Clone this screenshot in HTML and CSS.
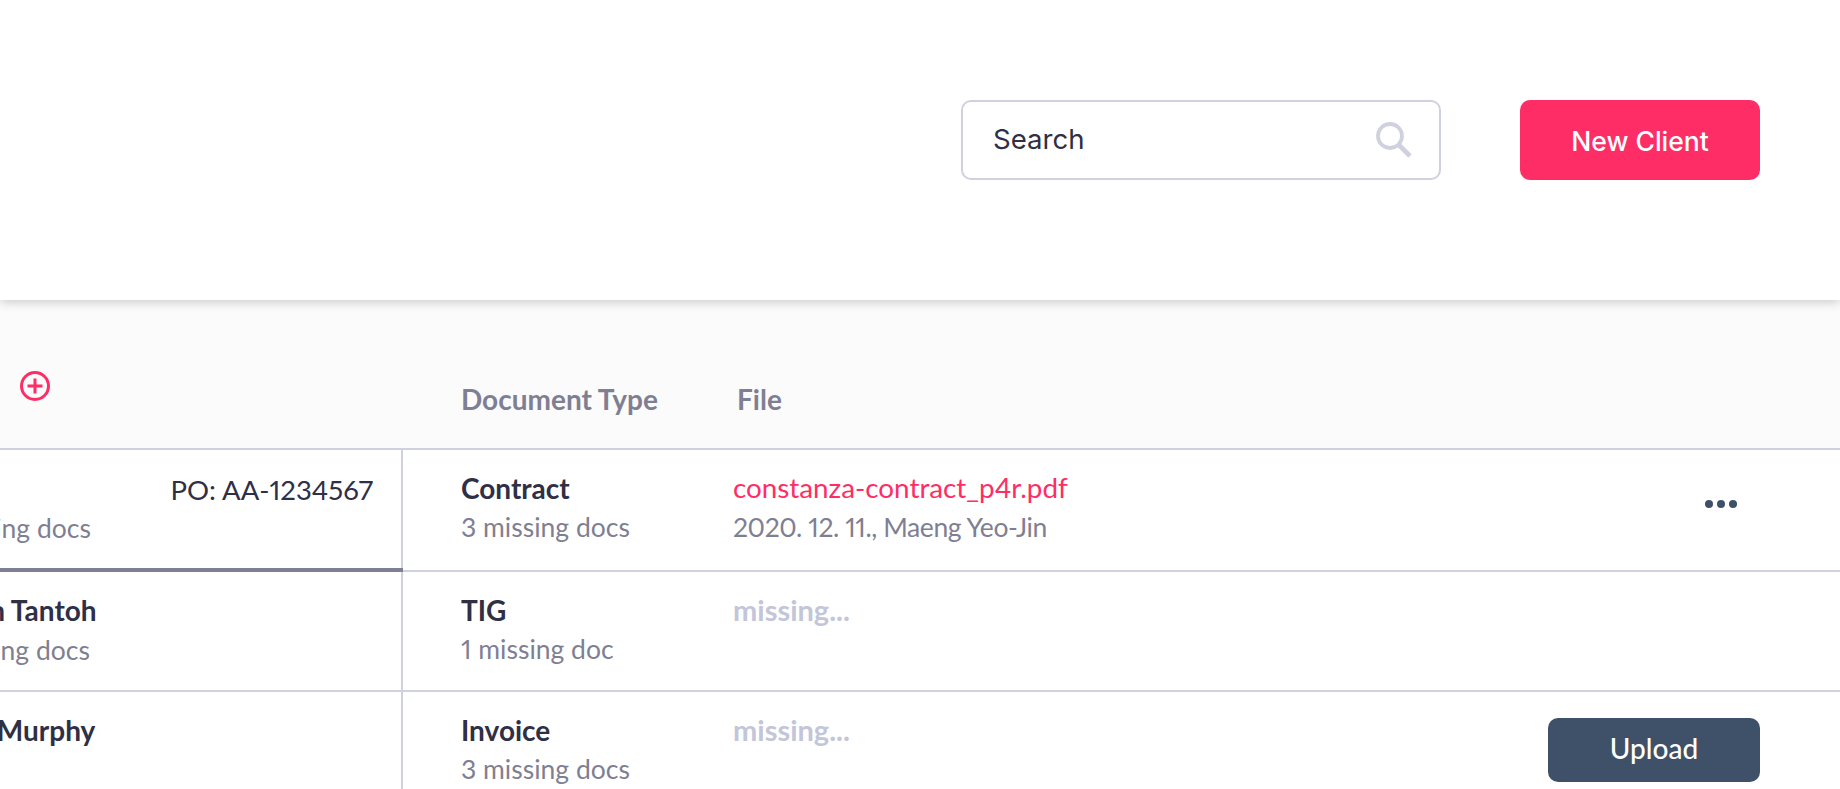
FILE: index.html
```html
<!DOCTYPE html>
<html lang="en">
<head>
<meta charset="utf-8">
<title>Clients</title>
<link rel="stylesheet" href="styles.css">
</head>
<body>
<div class="page">
  <header class="topbar">
    <div class="search">
      <span class="search-label">Search</span>
      <svg class="search-icon" width="38" height="38" viewBox="0 0 38 38" fill="none" stroke="#d0d1e0" stroke-width="3.8">
        <circle cx="15" cy="15" r="12"/>
        <path d="M23.5 23.5 35 35" stroke-width="4.6"/>
      </svg>
    </div>
    <button class="btn btn-new">New Client</button>
  </header>
  <main class="table">
    <div class="row row-head">
      <div class="cell-client head-client">
        <svg class="add-icon" width="32" height="32" viewBox="0 0 32 32" fill="none" stroke="#ff2d65" stroke-width="3">
          <circle cx="16" cy="16" r="13.5"/>
          <path d="M16 8.5v15M8.5 16h15"/>
        </svg>
      </div>
      <div class="cell-type head-label">Document Type</div>
      <div class="cell-file head-label head-file">File</div>
    </div>
    <div class="row row-one">
      <div class="cell-client selected">
        <div class="client-line"><span></span><span class="po">PO: AA-1234567</span></div>
        <div class="sub client-sub">3 missing docs</div>
      </div>
      <div class="cell-type"><div class="title">Contract</div><div class="sub">3 missing docs</div></div>
      <div class="cell-file"><a class="file-link">constanza-contract_p4r.pdf</a><div class="sub date">2020. 12. 11., Maeng Yeo-Jin</div></div>
      <div class="cell-action"><span class="dots"><i></i><i></i><i></i></span></div>
    </div>
    <div class="row row-two">
      <div class="cell-client">
        <div class="client-name title">Ryan Tantoh</div>
        <div class="sub client-sub sub-two">3 missing docs</div>
      </div>
      <div class="cell-type"><div class="title">TIG</div><div class="sub">1 missing doc</div></div>
      <div class="cell-file"><div class="missing">missing...</div></div>
      <div class="cell-action"></div>
    </div>
    <div class="row row-three">
      <div class="cell-client">
        <div class="client-name title name-three">Ann Murphy</div>
      </div>
      <div class="cell-type"><div class="title">Invoice</div><div class="sub">3 missing docs</div></div>
      <div class="cell-file"><div class="missing">missing...</div></div>
      <div class="cell-action"><button class="btn btn-upload">Upload</button></div>
    </div>
  </main>
</div>
</body>
</html>
```
FILE: styles.css
```css
* { box-sizing: border-box; }
html, body { margin: 0; height: 100%; overflow: hidden; }
body { font-family: "Lato", "Open Sans", sans-serif; color: #2f2f45; background: #fff; font-variant-numeric: proportional-nums; }
.page { width: 1840px; height: 789px; display: flex; flex-direction: column; overflow: hidden; background: #fff; }

.topbar {
  height: 300px; flex: none; display: flex; justify-content: flex-end; align-items: flex-start;
  gap: 79px; padding: 100px 80px 0 0; background: #fff;
  box-shadow: 0 2px 10px rgba(0,0,0,.2); position: relative; z-index: 1;
}
.search {
  width: 480px; height: 80px; border: 2px solid #d0d1e0; border-radius: 10px;
  display: flex; align-items: center; justify-content: space-between; padding: 0 26px 0 30px;
}
.search-label { font-family: "Inter", sans-serif; font-size: 27.6px; color: #2f2f45; margin-top: -2px; }
.search-icon { margin-top: -1px; }
.btn { border: 0; color: #fff; cursor: pointer; }
.btn-new {
  width: 240px; height: 80px; background: #ff2d65; border-radius: 10px; padding: 2px 0 0;
  font-family: "Inter", sans-serif; font-size: 26.5px; font-weight: 500;
}

.table { flex: 1; display: flex; flex-direction: column; min-height: 0; }
.row { display: grid; grid-template-columns: 403px 330px 1fr 360px; border-bottom: 2px solid #cfd0e0; background: #fff; }
.row-head { height: 150px; background: #fbfbfb; }
.row-one { height: 122px; }
.row-two { height: 120px; }
.row-three { flex: 1; border-bottom: 0; }

.cell-client { border-right: 2px solid #cfd0e0; padding: 21px 28px 0 0; position: relative; min-width: 0; }
.head-client { border-right: 0; padding: 70px 0 0 19px; }
.add-icon { display: block; }
.selected::after { content: ""; position: absolute; left: 0; right: -2px; bottom: -2px; height: 4px; background: #7f7f93; }
.head-label { font-size: 28px; font-weight: 700; color: #7f7f93; }
.row-head .cell-type { padding-top: 82px; }
.row-head .cell-file { padding: 82px 0 0 4px; }
.cell-type { padding: 19px 0 0 58px; }
.cell-file { padding-top: 19px; min-width: 0; }
.title { font-size: 28px; font-weight: 700; line-height: 38px; color: #2f2f45; white-space: nowrap; }
.sub { font-size: 26.5px; line-height: 38px; color: #7f7f93; white-space: nowrap; }
.cell-type .sub, .cell-file .sub { margin-top: 1px; }
.date { letter-spacing: -0.4px; }
.file-link { display: block; font-size: 27.8px; line-height: 38px; color: #ff2d65; white-space: nowrap; }
.missing { font-size: 29px; font-weight: 700; line-height: 38px; color: #c3c5d9; }
.client-line { display: flex; justify-content: space-between; height: 38px; line-height: 38px; }
.po { font-size: 27.5px; color: #2f2f45; white-space: nowrap; }
.client-sub { margin-left: -78px; }
.sub-two { margin-left: -79px; }
.client-name { margin: -2px 0 2px -57px; }
.client-name.name-three { margin-left: -61px; }

.cell-action { display: flex; justify-content: flex-end; align-items: flex-start; padding-right: 80px; }
.dots { display: flex; gap: 4px; margin: 50px 23px 0 0; }
.dots i { width: 8px; height: 8px; border-radius: 50%; background: #3f5069; display: block; }
.btn-upload {
  width: 212px; height: 64px; margin-top: 26px; background: #3f5069; border-radius: 10px; padding: 0 0 4px;
  font-family: "Lato", sans-serif; font-size: 28px; font-weight: 500;
}
```
